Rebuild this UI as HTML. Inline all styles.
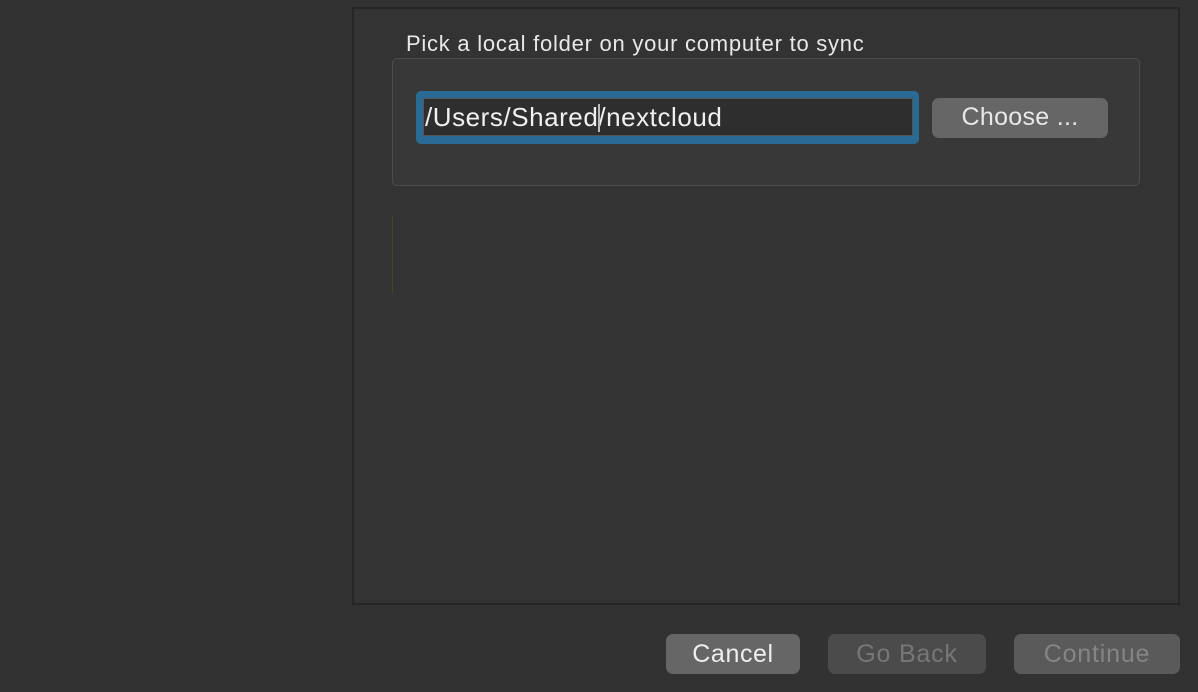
<!DOCTYPE html>
<html><head><meta charset="utf-8"><style>
html,body{margin:0;padding:0;}
body{width:1198px;height:692px;background:#323232;position:relative;overflow:hidden;font-family:"Liberation Sans",sans-serif;color:#e6e6e6;}
.abs{position:absolute;box-sizing:border-box;}
.panel{left:352px;top:7px;width:828px;height:598px;border:2px solid #262626;background:#333333;}
.label{left:406px;top:31px;font-size:22px;letter-spacing:0.75px;color:#e8e8e8;white-space:nowrap;}
.group{left:392px;top:58px;width:748px;height:128px;border:1px solid #4c4c4c;border-radius:5px;background:#383838;}
.ring{left:416px;top:91px;width:503px;height:53px;border-radius:5px;background:#2a6b96;}
.field{left:423px;top:98px;width:490px;height:38px;background:#2e2e2e;border:1px solid #555;}
.ftext{left:425px;top:102px;font-size:26px;letter-spacing:0.55px;color:#f0f0f0;white-space:pre;}
.caret{left:598px;top:104px;width:2px;height:28px;background:#bbb;}
.btn{border-radius:7px;background:#666;text-align:center;font-size:25px;color:#eee;white-space:nowrap;}
.green{left:392px;top:215px;width:1px;height:78px;background:#3d4a1f;}
</style></head><body>
<div class="abs panel"></div>
<div class="abs label">Pick a local folder on your computer to sync</div>
<div class="abs group"></div>
<div class="abs ring"></div>
<div class="abs field"></div>
<div class="abs ftext">/Users/Shared/nextcloud</div>
<div class="abs caret"></div>
<div class="abs btn" style="left:932px;top:98px;width:176px;height:40px;line-height:38px;color:#e8e8e8;letter-spacing:0.3px;">Choose ...</div>
<div class="abs green"></div>
<div class="abs btn" style="left:666px;top:634px;width:134px;height:40px;line-height:40px;letter-spacing:0.6px;">Cancel</div>
<div class="abs btn" style="left:828px;top:634px;width:158px;height:40px;line-height:40px;background:#4b4b4b;color:#777;letter-spacing:0.8px;">Go Back</div>
<div class="abs btn" style="left:1014px;top:634px;width:166px;height:40px;line-height:40px;background:#5a5a5a;color:#858585;letter-spacing:0.8px;">Continue</div>
</body></html>
